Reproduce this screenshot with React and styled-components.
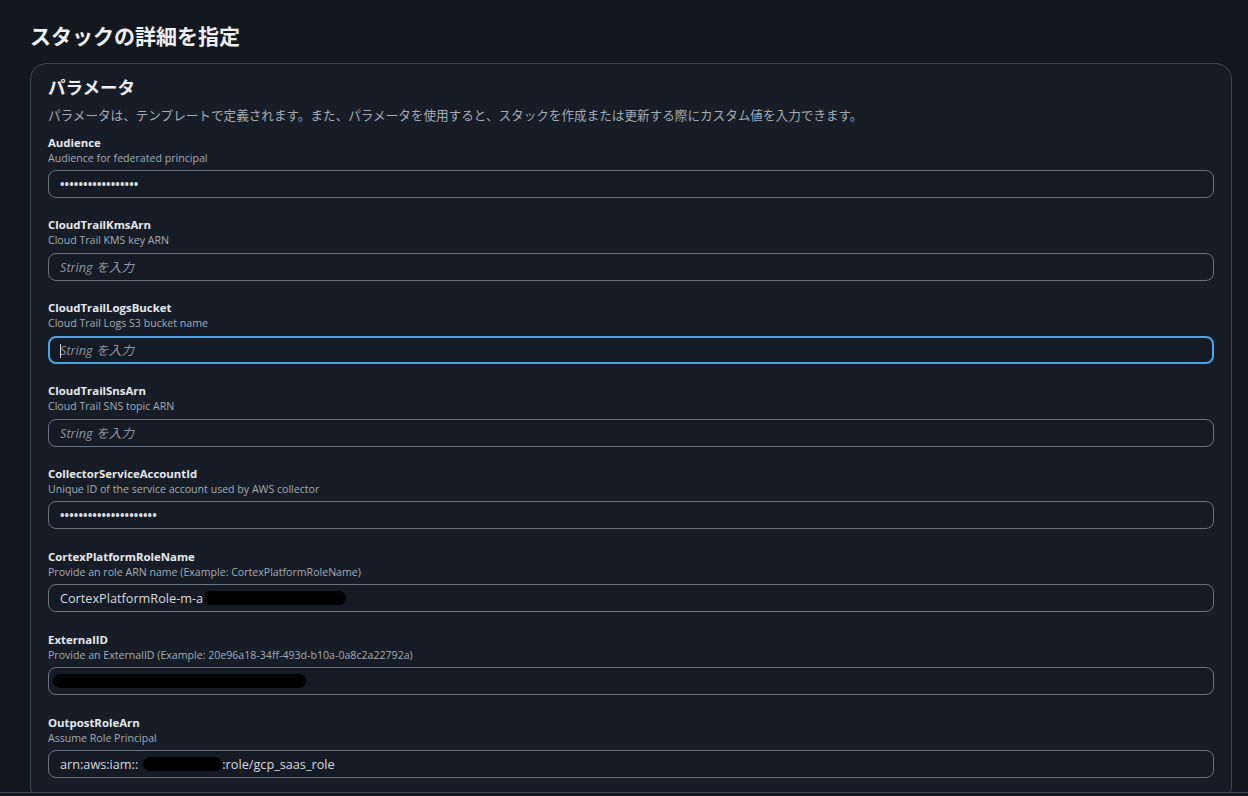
import styled, { createGlobalStyle } from "styled-components";

const GlobalStyle = createGlobalStyle`
    html, body {
        margin: 0;
        padding: 0;
        background: #13181f;
    }
    body {
        font-family: "Open Sans", "Noto Sans CJK JP", sans-serif;
        color: #e6e9ec;
        overflow: hidden;
    }
`;

const Page = styled.main`
    padding: 20px 16px 0 30px;
`;

const PageTitle = styled.h1`
    margin: 0 0 13px;
    font-size: 21px;
    line-height: 30px;
    font-weight: 700;
    color: #eef0f2;
    font-family: "Noto Sans CJK JP", sans-serif;
`;

const Card = styled.section`
    background: #161d26;
    border: 1px solid #3d4754;
    border-radius: 16px;
    padding: 11px 17px 24px 17px;
`;

const CardTitle = styled.h2`
    margin: 0;
    font-size: 17.5px;
    line-height: 24px;
    font-weight: 700;
    color: #eef0f2;
    font-family: "Noto Sans CJK JP", sans-serif;
`;

const CardDescription = styled.p`
    margin: 7px 0 10.5px;
    font-size: 12.6px;
    line-height: 18px;
    color: #a3abb5;
    font-family: "Noto Sans CJK JP", sans-serif;
`;

const FieldList = styled.div`
    display: flex;
    flex-direction: column;
    gap: 19.36px;
`;

const Field = styled.div`
    display: flex;
    flex-direction: column;
`;

const Label = styled.label`
    font-size: 11.4px;
    line-height: 16px;
    font-weight: 700;
    color: #e6e9ec;
`;

const Hint = styled.span`
    font-size: 10.6px;
    line-height: 15.5px;
    color: #a3abb5;
`;

const InputBox = styled.div`
    position: relative;
    margin-top: 4px;
    height: 28px;
    box-sizing: border-box;
    display: flex;
    align-items: center;
    padding: 0 ${(p) => (p.$focused ? 10 : 11)}px;
    border: ${(p) => (p.$focused ? "2px solid #48a6e6" : "1px solid #69737f")};
    border-radius: 8px;
    background: #151b24;
    font-size: 12.7px;
    color: #d5d9de;
    white-space: nowrap;
`;

const Placeholder = styled.span`
    font-style: italic;
    color: #8c96a3;
`;

// masked values, drawn as a row of bullets
const Dots = styled.span`
    font-size: 12px;
    font-weight: 700;
    letter-spacing: 0.1px;
    color: #d5d9de;
`;

const Redaction = styled.span`
    display: inline-block;
    height: 14px;
    width: ${(p) => p.$w}px;
    margin-left: ${(p) => p.$ml || 0}px;
    background: #000;
    border-radius: 7px;
`;

const Caret = styled.span`
    position: absolute;
    left: 10px;
    top: 6px;
    width: 1px;
    height: 14px;
    background: #d5d9de;
`;

const Footer = styled.div`
    position: fixed;
    left: 0;
    right: 0;
    bottom: 0;
    height: 3px;
    background: #13181f;
    border-top: 1px solid #3d4754;
`;

const fields = [
    {
        name: "Audience",
        hint: "Audience for federated principal",
        value: <Dots>{"•".repeat(17)}</Dots>,
    },
    {
        name: "CloudTrailKmsArn",
        hint: "Cloud Trail KMS key ARN",
    },
    {
        name: "CloudTrailLogsBucket",
        hint: "Cloud Trail Logs S3 bucket name",
        focused: true,
    },
    {
        name: "CloudTrailSnsArn",
        hint: "Cloud Trail SNS topic ARN",
    },
    {
        name: "CollectorServiceAccountId",
        hint: "Unique ID of the service account used by AWS collector",
        value: <Dots>{"•".repeat(21)}</Dots>,
    },
    {
        name: "CortexPlatformRoleName",
        hint: "Provide an role ARN name (Example: CortexPlatformRoleName)",
        value: (
            <>
                <span>CortexPlatformRole-m-a</span>
                <Redaction $w={143} />
            </>
        ),
    },
    {
        name: "ExternalID",
        hint: "Provide an ExternalID (Example: 20e96a18-34ff-493d-b10a-0a8c2a22792a)",
        value: <Redaction $w={253} $ml={-7} />,
    },
    {
        name: "OutpostRoleArn",
        hint: "Assume Role Principal",
        value: (
            <>
                <span>arn:aws:iam::</span>
                <Redaction $w={79} $ml={5} />
                <span>:role/gcp_saas_role</span>
            </>
        ),
    },
];

function App() {
    return (
        <>
            <GlobalStyle />
            <Page>
                <PageTitle>スタックの詳細を指定</PageTitle>
                <Card>
                    <CardTitle>パラメータ</CardTitle>
                    <CardDescription>
                        パラメータは、テンプレートで定義されます。また、パラメータを使用すると、スタックを作成または更新する際にカスタム値を入力できます。
                    </CardDescription>
                    <FieldList>
                        {fields.map((f) => (
                            <Field key={f.name}>
                                <Label>{f.name}</Label>
                                <Hint>{f.hint}</Hint>
                                <InputBox $focused={f.focused}>
                                    {f.value || (
                                        <Placeholder>String を入力</Placeholder>
                                    )}
                                    {f.focused && <Caret />}
                                </InputBox>
                            </Field>
                        ))}
                    </FieldList>
                </Card>
            </Page>
            <Footer />
        </>
    );
}

export default App;
